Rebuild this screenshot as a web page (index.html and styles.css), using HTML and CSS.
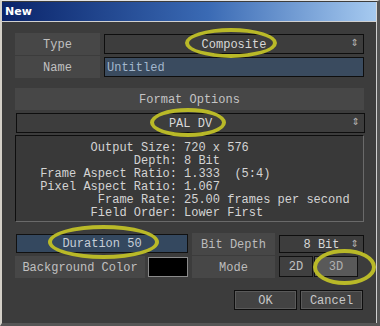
FILE: index.html
```html
<!DOCTYPE html>
<html>
<head>
<meta charset="utf-8">
<link rel="stylesheet" href="styles.css">
</head>
<body>
<div class="window">
  <div class="titlebar"><span class="title">New</span></div>
  <div class="content">
    <div class="grid-top">
      <div class="cell label">Type</div>
      <div class="field select">Composite<span class="arrows">&#8661;</span></div>
      <div class="cell label">Name</div>
      <div class="field name">Untitled</div>
    </div>

    <div class="cell section">Format Options</div>
    <div class="field select wide">PAL DV<span class="arrows">&#8661;</span></div>
    <div class="info">
      <div class="k">Output Size:</div><div class="v">720 x 576</div>
      <div class="k">Depth:</div><div class="v">8 Bit</div>
      <div class="k">Frame Aspect Ratio:</div><div class="v">1.333  (5:4)</div>
      <div class="k">Pixel Aspect Ratio:</div><div class="v">1.067</div>
      <div class="k">Frame Rate:</div><div class="v">25.00 frames per second</div>
      <div class="k">Field Order:</div><div class="v">Lower First</div>
    </div>

    <div class="grid-bottom">
      <div class="duration">Duration 50</div>
      <div class="cell label mid">Bit Depth</div>
      <div class="field select small">8 Bit<span class="arrows">&#8661;</span></div>

      <div class="bgcolor">
        <div class="cell label bglabel">Background Color</div>
        <div class="swatch"></div>
      </div>
      <div class="cell label mid">Mode</div>
      <div class="modes">
        <div class="mode">2D</div>
        <div class="mode on">3D</div>
      </div>
    </div>

    <div class="buttons">
      <div class="btn ok">OK</div>
      <div class="btn cancel">Cancel</div>
    </div>
  </div>

  <div class="ring r1"></div>
  <div class="ring r2"></div>
  <div class="ring r3"></div>
  <div class="ring r4"></div>
</div>
</body>
</html>
```

FILE: styles.css
```css
html, body {
  margin: 0;
  padding: 0;
  background: #3c3c3c;
}

.window {
  position: relative;
  width: 380px;
  height: 326px;
  box-sizing: border-box;
  border-style: solid;
  border-width: 1px 3px 3px 2px;
  border-color: #e4e4e4 #555555 #555555 #d4d0c8;
  background: #3c3c3c;
  font-family: "Liberation Mono", "Courier New", monospace;
  font-size: 12px;
  color: #cfcfcf;
  overflow: hidden;
}

.titlebar {
  height: 19px;
  margin-top: 1px;
  border-bottom: 1px solid #d0d0d0;
  border-right: 1px solid #d8d8d8;
  background: linear-gradient(to right, #0a246a 0%, #3a6ab4 55%, #a6caf0 100%);
  display: flex;
  align-items: center;
  padding-left: 3px;
}

.title {
  font-family: "DejaVu Sans", "Liberation Sans", sans-serif;
  font-weight: bold;
  font-size: 11px;
  color: #ffffff;
}

.content {
  padding: 11px 12px 0 13px;
  border-right: 1px solid #cfcfcf;
  height: 304px;
  box-sizing: border-box;
}

.cell {
  background: #474747;
  display: flex;
  align-items: center;
  justify-content: center;
  color: #c0c0c0;
  padding-top: 1px;
  box-sizing: border-box;
}

.grid-top {
  display: grid;
  grid-template-columns: 85px 1fr;
  grid-template-rows: 22px 22px;
  column-gap: 4px;
  row-gap: 1px;
}

.field {
  box-sizing: border-box;
  height: 20px;
  margin: 1px 0;
  border: 1px solid #0e0e0e;
  background: #3d3d3d;
  display: flex;
  align-items: center;
  position: relative;
  padding-top: 1px;
}

.select {
  justify-content: center;
  color: #d8d8d8;
}

.arrows {
  position: absolute;
  right: 4px;
  top: 2px;
  font-family: "DejaVu Sans", sans-serif;
  font-size: 10px;
  color: #b0b0b0;
}

.name {
  background: #3a4b5f;
  color: #a3b7cd;
  padding-left: 2px;
}

.section {
  height: 22px;
  margin-top: 10px;
  color: #c4c4c4;
  padding-top: 2px;
}

.wide {
  margin: 3px 0 0 1px;
  width: 349px;
}

.info {
  box-sizing: border-box;
  height: 87px;
  margin: 2px 0 0 0;
  border: 1px solid #0e0e0e;
  border-right-color: #6a6a6a;
  border-bottom-color: #6a6a6a;
  background: #393939;
  display: grid;
  grid-template-columns: 161px 1fr;
  column-gap: 7px;
  align-content: start;
  padding-top: 6px;
  line-height: 13px;
  color: #d4d4d4;
}

.k { text-align: right; white-space: pre; }
.v { white-space: pre; }

.grid-bottom {
  display: grid;
  grid-template-columns: 173px 83px 85px;
  grid-template-rows: 22px 22px;
  column-gap: 4px;
  row-gap: 1px;
  margin-top: 11px;
}

.duration {
  box-sizing: border-box;
  height: 19px;
  margin: 1px 0 0 1px;
  border: 1px solid #111;
  background: #34485f;
  color: #c6ced8;
  display: flex;
  align-items: center;
  justify-content: center;
  padding-top: 1px;
}

.mid { color: #bcbcbc; }

.small {
  margin: 2px 0 0 0;
  height: 18px;
}

.bgcolor {
  display: flex;
  gap: 3px;
}

.bglabel {
  width: 130px;
}

.swatch {
  box-sizing: border-box;
  width: 40px;
  height: 20px;
  margin-top: 1px;
  background: #000;
  border: 1px solid #8a8a8a;
}

.modes {
  display: flex;
  gap: 1px;
}

.mode {
  box-sizing: border-box;
  width: 34px;
  height: 21px;
  border: 1px solid #111;
  background: #404040;
  color: #c0c0c0;
  display: flex;
  align-items: center;
  justify-content: center;
  padding-top: 1px;
}

.mode.on {
  width: 44px;
  background: #595959;
  color: #b0b0b0;
}

.buttons {
  display: flex;
  justify-content: flex-end;
  gap: 3px;
  margin-top: 12px;
  padding-right: 1px;
}

.btn {
  box-sizing: border-box;
  height: 20px;
  border: 1px solid #0e0e0e;
  box-shadow: inset 0 0 0 1px #5a5a5a;
  background: #434343;
  color: #c8c8c8;
  display: flex;
  align-items: center;
  justify-content: center;
  padding-top: 1px;
}

.ok { width: 63px; }
.cancel { width: 63px; }

.ring {
  position: absolute;
  box-sizing: border-box;
  border: 4px solid #b9b928;
  border-radius: 50%;
}

.r1 { left: 183px; top: 27px; width: 92px; height: 30px; }
.r2 { left: 148px; top: 107px; width: 76px; height: 29px; }
.r3 { left: 46px; top: 224px; width: 111px; height: 34px; }
.r4 { left: 311px; top: 248px; width: 63px; height: 36px; }
```
